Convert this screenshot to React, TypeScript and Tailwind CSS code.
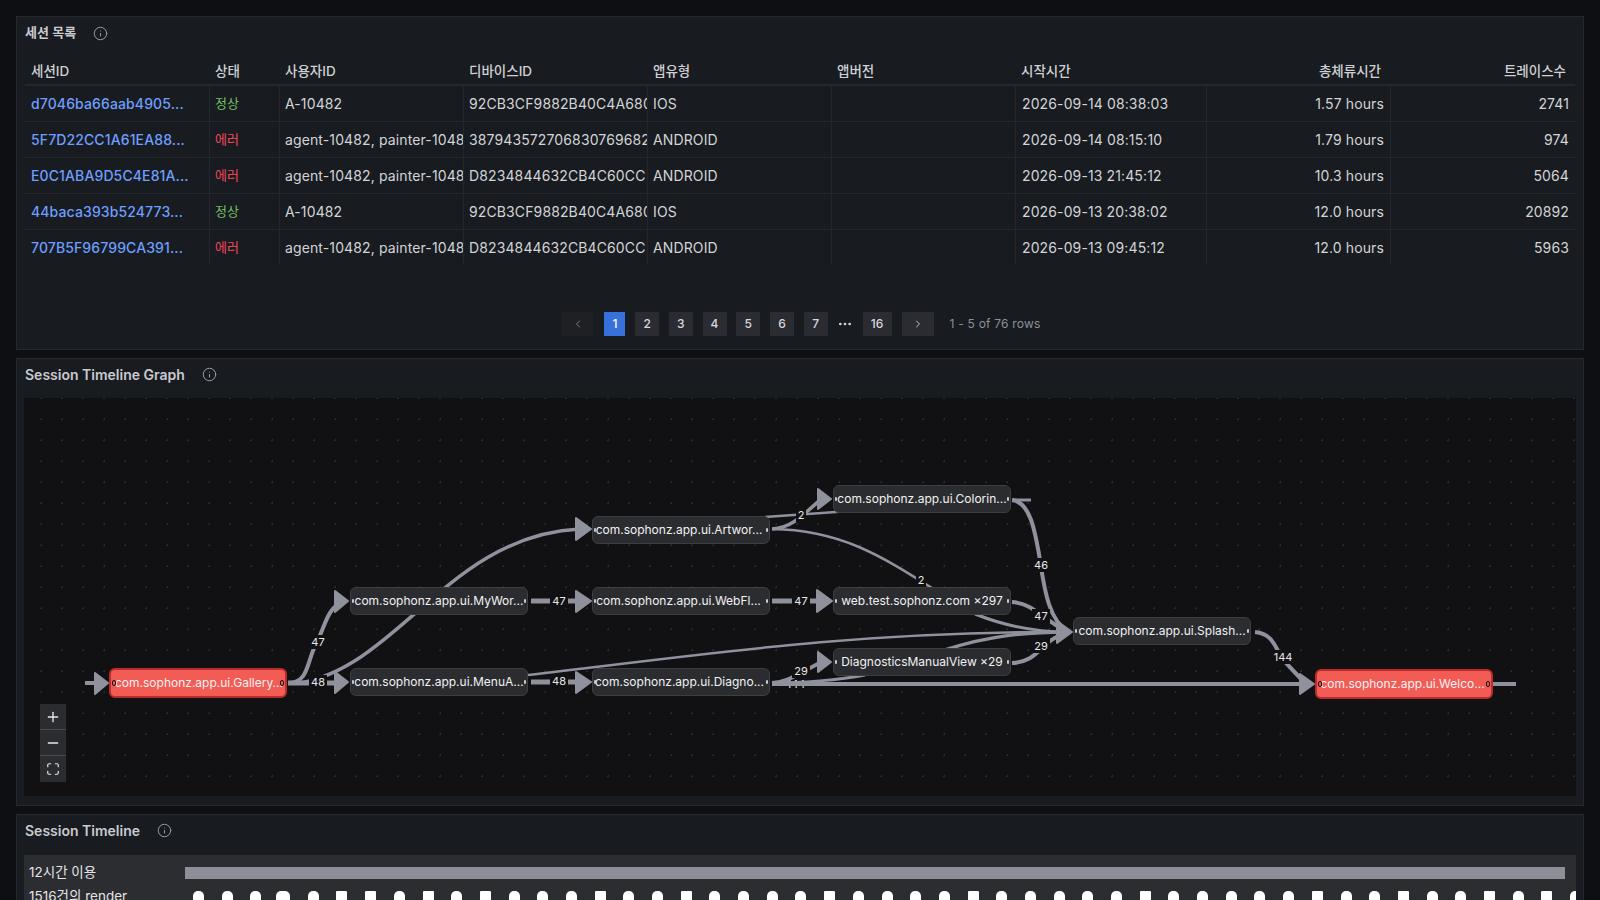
import { Info, Maximize, Minus, Plus, ChevronLeft, ChevronRight, MoreHorizontal } from 'lucide-react'

const columns = 'grid grid-cols-[184px_70px_184px_184px_184px_184px_191px_184px_185px]'

const rows = [
  { id: 'd7046ba66aab4905...', ok: true, user: 'A-10482', device: '92CB3CF9882B40C4A6803F1E', app: 'IOS', start: '2026-09-14 08:38:03', total: '1.57 hours', traces: '2741' },
  { id: '5F7D22CC1A61EA88...', ok: false, user: 'agent-10482, painter-10482', device: '387943572706830769682144', app: 'ANDROID', start: '2026-09-14 08:15:10', total: '1.79 hours', traces: '974' },
  { id: 'E0C1ABA9D5C4E81A...', ok: false, user: 'agent-10482, painter-10482', device: 'D8234844632CB4C60CC 91A7', app: 'ANDROID', start: '2026-09-13 21:45:12', total: '10.3 hours', traces: '5064' },
  { id: '44baca393b524773...', ok: true, user: 'A-10482', device: '92CB3CF9882B40C4A6803F1E', app: 'IOS', start: '2026-09-13 20:38:02', total: '12.0 hours', traces: '20892' },
  { id: '707B5F96799CA391...', ok: false, user: 'agent-10482, painter-10482', device: 'D8234844632CB4C60CC 91A7', app: 'ANDROID', start: '2026-09-13 09:45:12', total: '12.0 hours', traces: '5963' },
]

const pages = [
  { label: '1', cls: 'w-[21px] bg-[#3871dc] text-white' },
  { label: '2', cls: 'w-[24px] bg-[#2a2c31] text-[#d8d9de]' },
  { label: '3', cls: 'w-[24px] bg-[#2a2c31] text-[#d8d9de]' },
  { label: '4', cls: 'w-[24px] bg-[#2a2c31] text-[#d8d9de]' },
  { label: '5', cls: 'w-[24px] bg-[#2a2c31] text-[#d8d9de]' },
  { label: '6', cls: 'w-[24px] bg-[#2a2c31] text-[#d8d9de]' },
  { label: '7', cls: 'w-[24px] bg-[#2a2c31] text-[#d8d9de]' },
]

const nodes = [
  { label: 'com.sophonz.app.ui.Gallery...', red: true, pos: 'left-[85px] top-[270px] pl-[2px]' },
  { label: 'com.sophonz.app.ui.MyWor...', pos: 'left-[326px] top-[189px]' },
  { label: 'com.sophonz.app.ui.MenuA...', pos: 'left-[326px] top-[270px]' },
  { label: 'com.sophonz.app.ui.Artwor...', pos: 'left-[568px] top-[118px] pr-[4px]' },
  { label: 'com.sophonz.app.ui.WebFl...', pos: 'left-[568px] top-[189px] pr-[5px]' },
  { label: 'com.sophonz.app.ui.Diagno...', pos: 'left-[568px] top-[270px] pr-[3px]' },
  { label: 'com.sophonz.app.ui.Colorin...', pos: 'left-[809px] top-[87px]' },
  { label: 'web.test.sophonz.com ×297', pos: 'left-[809px] top-[189px]' },
  { label: 'DiagnosticsManualView ×29', pos: 'left-[809px] top-[250px]' },
  { label: 'com.sophonz.app.ui.Splash...', pos: 'left-[1049px] top-[219px]' },
  { label: 'com.sophonz.app.ui.Welco...', red: true, pos: 'left-[1291px] top-[271px] pr-[3px]' },
]

const edgeLabels = [
  { text: '47', x: 318, y: 642 },
  { text: '48', x: 318, y: 682 },
  { text: '47', x: 559, y: 601 },
  { text: '48', x: 559, y: 681 },
  { text: '47', x: 801, y: 601 },
  { text: '2', x: 801, y: 515 },
  { text: '2', x: 921, y: 580 },
  { text: '46', x: 1041, y: 565 },
  { text: '47', x: 1041, y: 616 },
  { text: '29', x: 1041, y: 646 },
  { text: '29', x: 801, y: 671 },
  { text: '144', x: 1283, y: 657 },
]

const arrows = [
  '95,673 108,683 95,694',
  '335,591 348,601 335,612',
  '335,672 348,682 335,693',
  '576,518 591,529 576,540',
  '576,591 591,601 576,612',
  '576,672 591,682 576,693',
  '818,489 831,499 818,509',
  '817,590 832,601 817,612',
  '818,652 831,662 818,672',
  '1057,621 1072,632 1057,643',
  '1300,674 1314,684 1300,694',
]

const edges = [
  { d: 'M85 683H98', w: 4 },
  { d: 'M288 683C310 683 306 660 318 640C326 622 328 610 340 603', w: 4 },
  { d: 'M288 683H336', w: 5 },
  { d: 'M300 683C400 665 450 535 580 529', w: 3.5 },
  { d: 'M531 601H578', w: 5 },
  { d: 'M531 682H578', w: 5 },
  { d: 'M528 675C700 655 850 632 1060 632', w: 2.5 },
  { d: 'M772 601H820', w: 5 },
  { d: 'M772 529C790 528 800 518 820 500', w: 3.5 },
  { d: 'M765 517L850 511', w: 2.5 },
  { d: 'M772 529C840 530 880 555 935 590', w: 2.5 },
  { d: 'M1012 500H1031', w: 3 },
  { d: 'M1012 500C1030 502 1035 530 1040 560C1045 595 1050 620 1068 632', w: 4 },
  { d: 'M1012 602C1035 604 1040 618 1068 632', w: 4 },
  { d: 'M975 614C1010 628 1040 632 1068 632', w: 3 },
  { d: 'M1012 663C1040 662 1040 640 1068 632', w: 4 },
  { d: 'M945 650C990 635 1030 632 1068 632', w: 3.5 },
  { d: 'M772 683C790 682 800 672 822 662', w: 4 },
  { d: 'M772 683C800 683 840 680 865 675', w: 3 },
  { d: 'M1255 632C1275 634 1275 650 1285 662L1303 681', w: 4 },
  { d: 'M1493 684H1516', w: 4 },
]

const squareMarks = [5, 6, 8, 10, 14, 17, 22, 27, 33, 39, 42, 45, 47]
const marks = Array.from({ length: 49 }, (_, i) => i)

function Title({ text, size, lift }: { text: string; size: string; lift?: boolean }) {
  return (
    <div className={`flex h-[32px] items-center px-2 ${lift ? 'pb-[2px]' : ''}`}>
      <span className={`font-semibold text-[#c9cad0] ${size}`}>{text}</span>
      <Info className="ml-[17px] h-[15px] w-[15px] text-[#a0a2a9]" strokeWidth={1.5} />
    </div>
  )
}

function GraphNode({ label, red, pos }: { label: string; red?: boolean; pos: string }) {
  const box = red
    ? 'h-[30px] w-[178px] border-2 border-[#b92c2c] bg-[#f25c54]'
    : 'h-[28px] w-[178px] border border-[#3d3e42] bg-[#2b2c2f]'
  const dot = red ? 'h-[6px] w-[4px] border border-[#111] bg-[#f25c54]' : 'h-[4px] w-[2px] bg-[#c8c9cd]'
  return (
    <div className={`absolute flex items-center justify-center rounded-md text-[12px] whitespace-nowrap text-[#f2f2f4] ${box} ${pos}`}>
      <span className={`absolute left-[1px] rounded-full ${dot}`} />
      {label}
      <span className={`absolute right-[1px] rounded-full ${dot}`} />
    </div>
  )
}

export default function App() {
  return (
    <div className="flex h-[900px] flex-col overflow-hidden bg-[#0e0f13] px-4 pt-4 [font-family:Inter,'Noto_Sans_CJK_KR',sans-serif]">
      <section className="h-[334px] shrink-0 border border-[#26282d] bg-[#181b1f]">
        <Title text="세션 목록" size="text-[13px]" />
        <div className="mx-2 mt-[7px] text-[14px] text-[#d3d4d8]">
          <div className={`${columns} h-[30px] items-center border-b-2 border-[#24262b] pt-[2px] text-[13.5px] font-medium text-[#d0d1d6]`}>
            <div className="pl-[6px]">세션ID</div>
            <div className="pl-[6px]">상태</div>
            <div className="pl-[6px]">사용자ID</div>
            <div className="pl-[6px]">디바이스ID</div>
            <div className="pl-[6px]">앱유형</div>
            <div className="pl-[6px]">앱버전</div>
            <div className="pl-[6px]">시작시간</div>
            <div className="pr-[9px] text-right">총체류시간</div>
            <div className="pr-[9px] text-right">트레이스수</div>
          </div>
          {rows.map((r, i) => (
            <div key={r.id} className={`${columns} h-[36px] items-stretch border-b tracking-[0.12px] whitespace-nowrap ${i < 4 ? 'border-[#24262b]' : 'border-transparent'}`}>
              <div className="flex items-center overflow-hidden pl-[6px] font-medium text-[#6e9fff]">{r.id}</div>
              <div className={`flex items-center border-l border-[#24262b] pl-[5px] text-[13px] ${r.ok ? 'text-[#73bf69]' : 'text-[#f2495c]'}`}>{r.ok ? '정상' : '에러'}</div>
              <div className="flex items-center overflow-hidden border-l border-[#24262b] pl-[5px]">{r.user}</div>
              <div className="flex items-center overflow-hidden border-l border-[#24262b] pl-[5px]">{r.device}</div>
              <div className="flex items-center overflow-hidden border-l border-[#24262b] pl-[5px]">{r.app}</div>
              <div className="border-l border-[#24262b]" />
              <div className="flex items-center border-l border-[#24262b] pl-[6px]">{r.start}</div>
              <div className="flex items-center justify-end border-l border-[#24262b] pr-[6px]">{r.total}</div>
              <div className="flex items-center justify-end border-l border-[#24262b] pr-[6px]">{r.traces}</div>
            </div>
          ))}
        </div>
        <div className="mt-[46px] flex h-[24px] items-center justify-center pl-[3px] text-[12px] font-medium">
          <div className="mr-[11px] flex h-full w-[31px] items-center justify-center bg-[#1e2024] text-[#7c7e85]">
            <ChevronLeft className="h-3 w-3" />
          </div>
          <div className="flex h-full gap-[9.7px]">
            {pages.map(p => (
              <div key={p.label} className={`flex h-full items-center justify-center ${p.cls}`}>{p.label}</div>
            ))}
          </div>
          <MoreHorizontal className="mx-[9.5px] h-4 w-4 text-[#d8d9de]" />
          <div className="flex h-full w-[29px] items-center justify-center bg-[#2a2c31] text-[#d8d9de]">16</div>
          <div className="ml-[10px] flex h-full w-[32px] items-center justify-center bg-[#2a2c31] text-[#c4c5ca]">
            <ChevronRight className="h-3 w-3" />
          </div>
          <span className="ml-[16px] font-normal tracking-[0.2px] text-[#8e9097]">1 - 5 of 76 rows</span>
        </div>
      </section>

      <section className="mt-[8px] h-[448px] shrink-0 border border-[#26282d] bg-[#181b1f]">
        <Title text="Session Timeline Graph" size="text-[14px]" lift />
        <div className="relative mx-[7px] mt-[7px] h-[398px] overflow-hidden bg-[#111113] bg-[radial-gradient(#2c2c2f_1px,transparent_1px)] bg-[position:7px_-10px] bg-[size:21px_21px]">
          <svg className="absolute top-0 left-0 h-[398px] w-[1552px]" viewBox="24 398 1552 398" fill="none">
            <text x="796" y="688" textAnchor="middle" className="fill-[#e8e8ea] text-[11px]">144</text>
            <path d="M772 684H1302" stroke="#8f919c" strokeWidth="4" />
            {edges.map(e => (
              <path key={e.d} d={e.d} stroke="#8f919c" strokeWidth={e.w} />
            ))}
            {arrows.map(a => (
              <polygon key={a} points={a} fill="#8f919c" stroke="#8f919c" strokeWidth="2" strokeLinejoin="round" />
            ))}
            {edgeLabels.map(l => (
              <g key={`${l.x}-${l.y}`}>
                <rect x={l.x - (l.text.length * 4 + 1)} y={l.y - 7} width={l.text.length * 8 + 2} height={14} fill="#111113" />
                <text x={l.x} y={l.y + 4} textAnchor="middle" className="fill-[#e8e8ea] text-[11px]">{l.text}</text>
              </g>
            ))}
          </svg>
          {nodes.map(n => (
            <GraphNode key={n.label} {...n} />
          ))}
          <div className="absolute top-[306px] left-[16px] flex w-[26px] flex-col divide-y divide-[#4a4b50] bg-[#2b2c2f] text-[#e8e8ea]">
            <div className="flex h-[26px] items-center justify-center"><Plus className="h-4 w-4" /></div>
            <div className="flex h-[26px] items-center justify-center"><Minus className="h-4 w-4" /></div>
            <div className="flex h-[26px] items-center justify-center"><Maximize className="h-[14px] w-[14px]" /></div>
          </div>
        </div>
      </section>

      <section className="mt-[8px] grow border border-[#26282d] bg-[#181b1f]">
        <Title text="Session Timeline" size="text-[14px]" lift />
        <div className="mx-[7px] mt-[8px] h-[60px] overflow-hidden bg-[#2c2d30] pt-[12px] text-[13.5px] text-[#e4e4e8]">
          <div className="flex h-[12px] items-center">
            <span className="w-[161px] shrink-0 pb-[2px] pl-[5px]">12시간 이용</span>
            <div className="h-[12px] w-[1380px] bg-[#8e8e99]" />
          </div>
          <div className="mt-[12px] flex h-[12px] items-center">
            <span className="w-[169px] shrink-0 pb-[2px] pl-[5px] whitespace-nowrap">1516건의 render</span>
            <div className="flex h-[12px] items-start gap-[17.7px]">
              {marks.map(m => (
                <div key={m} className={`h-[12px] shrink-0 bg-white ${m === 3 ? '-ml-[3px] w-[14px]' : 'w-[11px]'} ${squareMarks.includes(m) ? 'rounded-t-[1px]' : 'rounded-t-[5px]'}`} />
              ))}
            </div>
          </div>
        </div>
      </section>
    </div>
  )
}
